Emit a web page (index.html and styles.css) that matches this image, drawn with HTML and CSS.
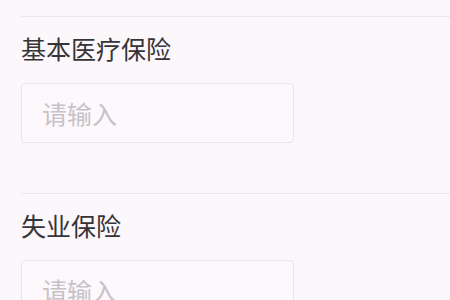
FILE: index.html
```html
<!DOCTYPE html>
<html lang="zh">
<head>
<meta charset="utf-8">
<link rel="stylesheet" href="styles.css">
</head>
<body>
<div class="form">
  <div class="field">
    <div class="label">基本医疗保险</div>
    <div class="input"><span class="placeholder">请输入</span></div>
  </div>
  <div class="field">
    <div class="label">失业保险</div>
    <div class="input"><span class="placeholder">请输入</span></div>
  </div>
</div>
</body>
</html>
```

FILE: styles.css
```css
html, body {
  margin: 0;
  padding: 0;
  background: #fbf7fb;
  font-family: "Noto Sans CJK SC", "Noto Sans", sans-serif;
}
.form {
  padding-top: 16px;
  padding-left: 21px;
  display: flex;
  flex-direction: column;
}
.field {
  border-top: 1px solid #ece7ec;
  padding-top: 19px;
  padding-bottom: 50px;
  display: flex;
  flex-direction: column;
  gap: 22px;
}
.label {
  font-size: 25px;
  line-height: 25px;
  color: #363436;
}
.input {
  box-sizing: border-box;
  width: 273px;
  height: 60px;
  border: 1px solid #e9e4e9;
  border-radius: 4px;
  background: #fcf8fc;
  padding-left: 20px;
  display: flex;
  align-items: center;
}
.placeholder {
  font-size: 25px;
  line-height: 25px;
  color: #c7c2c7;
}
```
